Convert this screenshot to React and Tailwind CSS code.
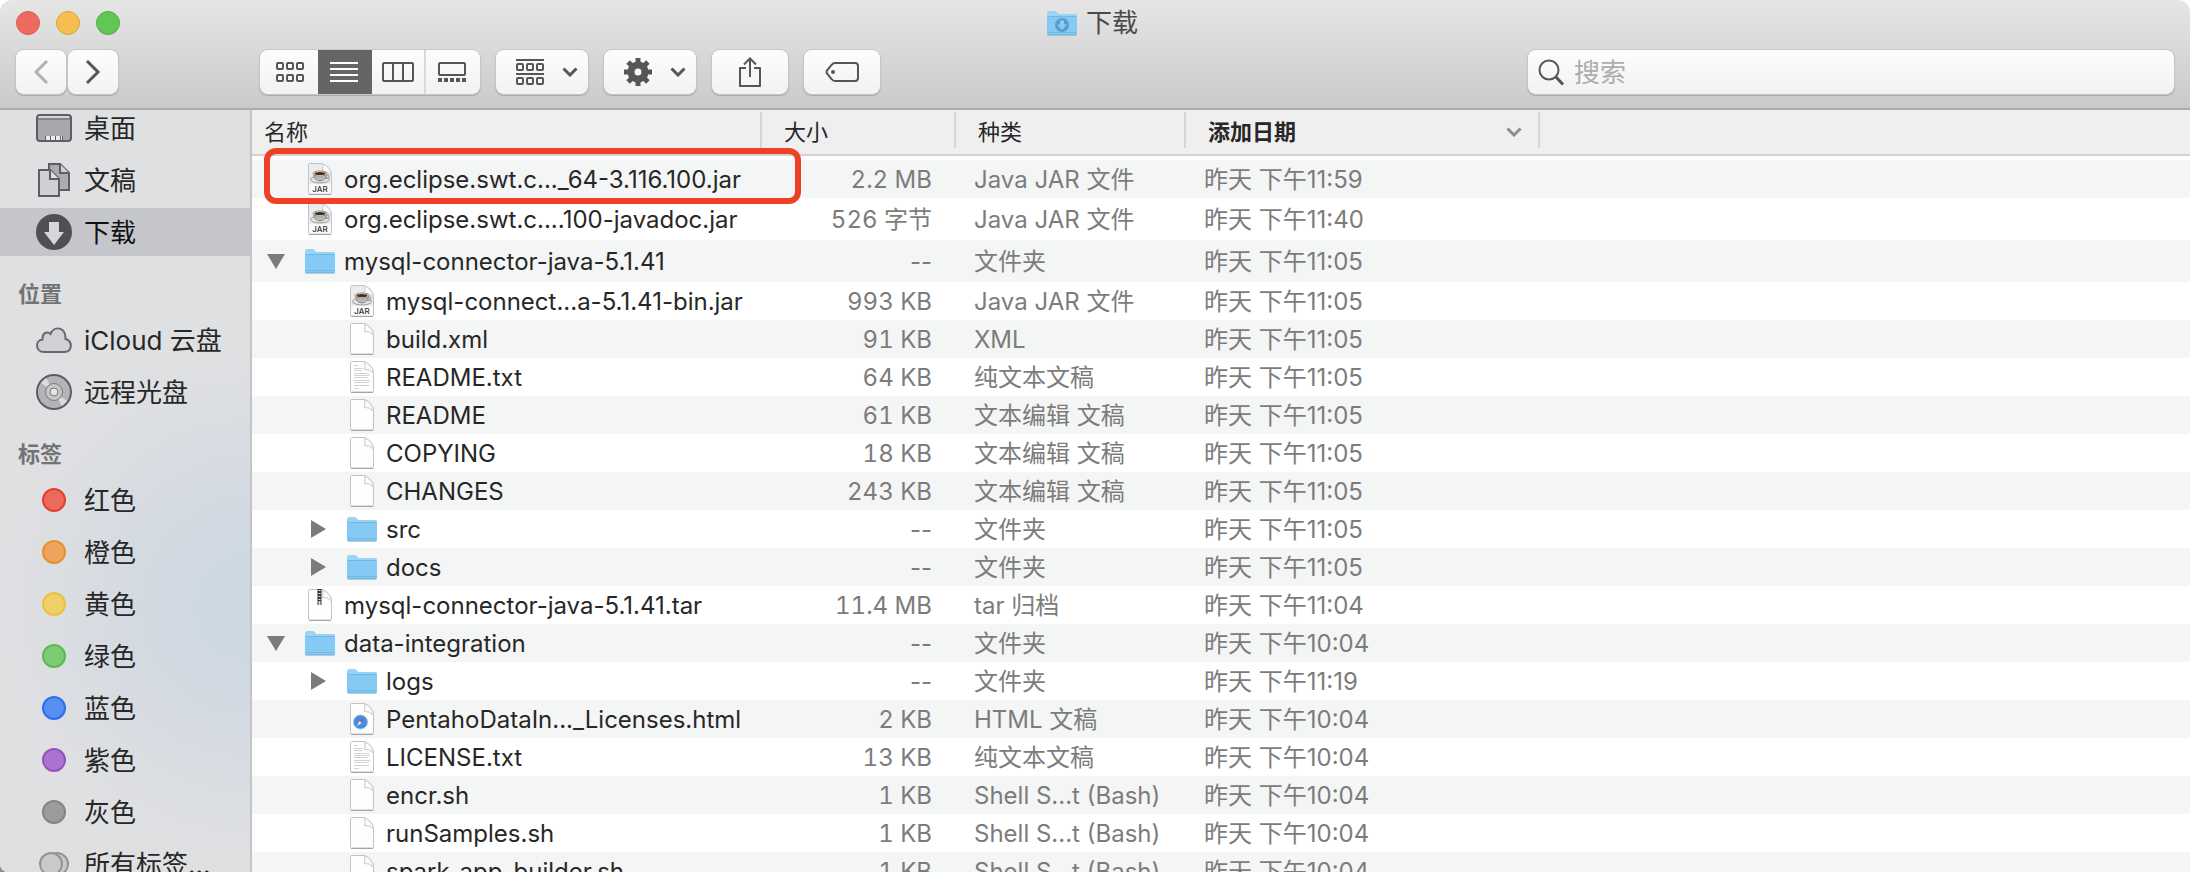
import React from 'react';
import clsx from 'clsx';

const files = [
  { name: 'org.eclipse.swt.c..._64-3.116.100.jar', icon: 'jar', depth: 0, size: '2.2 MB', kind: 'Java JAR 文件', date: '昨天 下午11:59' },
  { name: 'org.eclipse.swt.c....100-javadoc.jar', icon: 'jar', depth: 0, size: '526 字节', kind: 'Java JAR 文件', date: '昨天 下午11:40', tall: true },
  { name: 'mysql-connector-java-5.1.41', icon: 'folder', depth: 0, open: true, size: '--', kind: '文件夹', date: '昨天 下午11:05', tall: true },
  { name: 'mysql-connect...a-5.1.41-bin.jar', icon: 'jar', depth: 1, size: '993 KB', kind: 'Java JAR 文件', date: '昨天 下午11:05' },
  { name: 'build.xml', icon: 'blank', depth: 1, size: '91 KB', kind: 'XML', date: '昨天 下午11:05' },
  { name: 'README.txt', icon: 'text', depth: 1, size: '64 KB', kind: '纯文本文稿', date: '昨天 下午11:05' },
  { name: 'README', icon: 'blank', depth: 1, size: '61 KB', kind: '文本编辑 文稿', date: '昨天 下午11:05' },
  { name: 'COPYING', icon: 'blank', depth: 1, size: '18 KB', kind: '文本编辑 文稿', date: '昨天 下午11:05' },
  { name: 'CHANGES', icon: 'blank', depth: 1, size: '243 KB', kind: '文本编辑 文稿', date: '昨天 下午11:05' },
  { name: 'src', icon: 'folder', depth: 1, size: '--', kind: '文件夹', date: '昨天 下午11:05' },
  { name: 'docs', icon: 'folder', depth: 1, size: '--', kind: '文件夹', date: '昨天 下午11:05' },
  { name: 'mysql-connector-java-5.1.41.tar', icon: 'zip', depth: 0, size: '11.4 MB', kind: 'tar 归档', date: '昨天 下午11:04' },
  { name: 'data-integration', icon: 'folder', depth: 0, open: true, size: '--', kind: '文件夹', date: '昨天 下午10:04' },
  { name: 'logs', icon: 'folder', depth: 1, size: '--', kind: '文件夹', date: '昨天 下午11:19' },
  { name: 'PentahoDataIn..._Licenses.html', icon: 'html', depth: 1, size: '2 KB', kind: 'HTML 文稿', date: '昨天 下午10:04' },
  { name: 'LICENSE.txt', icon: 'text', depth: 1, size: '13 KB', kind: '纯文本文稿', date: '昨天 下午10:04' },
  { name: 'encr.sh', icon: 'blank', depth: 1, size: '1 KB', kind: 'Shell S...t (Bash)', date: '昨天 下午10:04' },
  { name: 'runSamples.sh', icon: 'blank', depth: 1, size: '1 KB', kind: 'Shell S...t (Bash)', date: '昨天 下午10:04' },
  { name: 'spark-app-builder.sh', icon: 'blank', depth: 1, size: '1 KB', kind: 'Shell S...t (Bash)', date: '昨天 下午10:04' },
];

const tags = [
  { name: '红色', color: 'bg-[#ec695d] border-[#e63f32]' },
  { name: '橙色', color: 'bg-[#eda65d] border-[#e98f30]' },
  { name: '黄色', color: 'bg-[#f0cf69] border-[#edc23e]' },
  { name: '绿色', color: 'bg-[#7ecb74] border-[#57bd4b]' },
  { name: '蓝色', color: 'bg-[#568ef1] border-[#2a6fee]' },
  { name: '紫色', color: 'bg-[#aa74d0] border-[#9550c4]' },
  { name: '灰色', color: 'bg-[#9c9c9e] border-[#858587]' },
];

const FolderIcon = ({ download = false }) => (
  <svg width="32" height="28" viewBox="0 0 32 28">
    <path d="M1 4.500Q1 2 3 2H9.500L12.500 5H29.500Q31 5 31 6.500V12H1Z" fill="#9bd3f5" />
    <path d="M1 8H31V25Q31 26 30 26H2Q1 26 1 25Z" fill="#84caf5" />
    <path d="M1.500 7.500H30.500M1.500 23.500H30.500" stroke="#6fb9e6" strokeWidth="1" fill="none" />
    <path d="M1.500 26H30.500" stroke="#69a9ce" strokeWidth="1" />
    {download && (
      <>
        <circle cx="16" cy="16" r="7" fill="#559fd3" />
        <path d="M14 11.500H18V15.500H21L16 21L11 15.500H14Z" fill="#8accf5" />
      </>
    )}
  </svg>
);

const FileIcon = ({ type }) => (
  <svg width="26" height="34" viewBox="0 0 26 34">
    <path d="M1.500 2.500Q1.500 1.500 2.500 1.500H15.500Q24.500 6 24.500 13V31Q24.500 32 23.500 32H2.500Q1.500 32 1.500 31Z" fill={type === 'jar' ? '#ececec' : '#fefefe'} stroke="#c3c3c3" />
    <path d="M2 32.500H24" stroke="#a5a5a5" />
    <path d="M15.500 1.500Q16.500 6 15.500 9.500Q21 9 24.500 13Q24 6 15.500 1.500Z" fill="#fbfbfb" stroke="#c9c9c9" />
    {type === 'text' && (
      <path d="M5 5.500H9M5 8.500H14M5 10.500H13M5 13.500H20M5 15.500H21M5 17.500H19M5 20.500H21M5 22.500H20M5 25.500H20M5 28.500H10" stroke="#d2d2d2" />
    )}
    {type === 'jar' && (
      <>
        <rect x="2" y="22" width="22" height="9.500" fill="#fafafa" />
        <ellipse cx="13" cy="17.500" rx="9.500" ry="3.500" fill="#e2e2e2" stroke="#9a9a9a" />
        <path d="M6.500 12Q7 18.500 13 19Q19 18.500 19.500 12Z" fill="#b9b9b9" stroke="#8a8a8a" />
        <path d="M19.500 13Q23 12.500 21.500 15.500Q20.500 16.500 18.500 16.500" fill="none" stroke="#8a8a8a" />
        <ellipse cx="13" cy="11.500" rx="7" ry="2.500" fill="#f6f6f6" stroke="#8d8d8d" />
        <ellipse cx="13" cy="11.500" rx="5.500" ry="1.500" fill="#4a2d12" />
        <text x="13" y="30" textAnchor="middle" fontSize="8" fontWeight="500" fontFamily="Inter, sans-serif" fill="#333">JAR</text>
      </>
    )}
    {type === 'zip' && (
      <>
        <path d="M12.500 1V17" stroke="#333" strokeWidth="4" />
        <path d="M12.500 2V13" stroke="#eee" strokeWidth="2" strokeDasharray="1 2" />
        <rect x="11.500" y="13" width="2" height="4" fill="#ddd" />
      </>
    )}
    {type === 'html' && (
      <>
        <circle cx="11.500" cy="20" r="7" fill="#3f8ee6" stroke="#a9bdd8" />
        <path d="M15 16L12.500 21L10.500 19Z" fill="#e2483d" />
        <path d="M8 24L10.500 19L12.500 21Z" fill="#f3f3f3" />
      </>
    )}
  </svg>
);

const Chevron = ({ className }) => (
  <svg width="16" height="10" viewBox="0 0 16 10" fill="none" stroke="currentColor" strokeWidth="3" className={className}>
    <path d="M1.500 1.500L8 8L14.500 1.500" />
  </svg>
);

const ToolButton = ({ label, className, children }) => (
  <button
    type="button"
    aria-label={label}
    className={clsx(
      'flex h-11 items-center justify-center rounded-lg bg-linear-to-b from-[#fdfdfd] to-[#f2f2f2] text-[#565656] shadow-[0_0_0_1px_#c6c6c6,0_1px_1px_1px_#a8a8a8]',
      className
    )}
  >
    {children}
  </button>
);

const Toolbar = () => (
  <header className="shrink-0 border-b-2 border-[#acacac] bg-linear-to-b from-[#e6e6e6] to-[#cacaca]">
    <div className="grid h-[46px] grid-cols-3 items-center px-4">
      <div className="flex gap-4">
        <button type="button" aria-label="关闭" className="size-6 rounded-full border border-[#dc574d] bg-[#ee6a5f]" />
        <button type="button" aria-label="最小化" className="size-6 rounded-full border border-[#dda23c] bg-[#f5bf4f]" />
        <button type="button" aria-label="缩放" className="size-6 rounded-full border border-[#4fac41] bg-[#62c655]" />
      </div>
      <h1 className="flex items-center justify-center gap-2 pr-1.5 text-[26px] leading-8 text-[#4b4b4b]">
        <FolderIcon download />
        下载
      </h1>
    </div>

    <div className="flex h-[62px] items-start px-4 pt-1">
      <div className="flex gap-0.5">
        <ToolButton label="后退" className="w-[50px]">
          <svg width="16" height="26" viewBox="0 0 16 26" fill="none" stroke="#b0b0b0" strokeWidth="3">
            <path d="M14 2L3 13L14 24" />
          </svg>
        </ToolButton>
        <ToolButton label="前进" className="w-[50px]">
          <svg width="16" height="26" viewBox="0 0 16 26" fill="none" stroke="currentColor" strokeWidth="3">
            <path d="M2 2L13 13L2 24" />
          </svg>
        </ToolButton>
      </div>

      {/* View switcher */}
      <div className="ml-[142px] flex h-11 overflow-hidden rounded-lg bg-linear-to-b from-[#fdfdfd] to-[#f2f2f2] text-[#565656] shadow-[0_0_0_1px_#c6c6c6,0_1px_1px_1px_#a8a8a8]">
        <button type="button" aria-label="图标" className="flex w-[58px] items-center justify-center pl-0.5">
          <svg width="28" height="20" viewBox="0 0 28 20" fill="none" stroke="currentColor" strokeWidth="2">
            {[1, 11, 21].map((x) => (
              <React.Fragment key={x}>
                <rect x={x} y="1" width="6" height="6" rx="1" />
                <rect x={x} y="13" width="6" height="6" rx="1" />
              </React.Fragment>
            ))}
          </svg>
        </button>
        <button type="button" aria-label="列表" aria-pressed="true" className="flex w-[54px] items-center justify-center bg-[#656565] pr-0.5 text-white">
          <svg width="28" height="20" viewBox="0 0 28 20" stroke="currentColor" strokeWidth="2">
            <path d="M0 1H28M0 7H28M0 13H28M0 19H28" />
          </svg>
        </button>
        <button type="button" aria-label="分栏" className="flex w-[54px] items-center justify-center border-r-2 border-[#d9d9d9]">
          <svg width="32" height="20" viewBox="0 0 32 20" fill="none" stroke="currentColor" strokeWidth="2">
            <rect x="1" y="1" width="30" height="18" rx="1" />
            <path d="M11 1V19M21 1V19" />
          </svg>
        </button>
        <button type="button" aria-label="画廊" className="flex w-[54px] items-center justify-center pr-0.5">
          <svg width="28" height="20" viewBox="0 0 28 20" fill="none" stroke="currentColor" strokeWidth="2">
            <rect x="1" y="1" width="26" height="12" rx="1" />
            <path d="M0 18H28" strokeWidth="4" strokeDasharray="4 2" />
          </svg>
        </button>
      </div>

      <div className="ml-4 flex gap-4">
        <ToolButton label="排列" className="w-[92px] gap-[18px] pl-2.5">
          <svg width="28" height="28" viewBox="0 0 28 28" fill="none" stroke="currentColor" strokeWidth="2">
            <path d="M0 2H28M0 16H28" />
            {[1, 11, 21].map((x) => (
              <React.Fragment key={x}>
                <rect x={x} y="6" width="6" height="6" rx="1" />
                <rect x={x} y="20" width="6" height="6" rx="1" />
              </React.Fragment>
            ))}
          </svg>
          <Chevron />
        </ToolButton>
        <ToolButton label="操作" className="w-[92px] gap-[18px] pl-2.5">
          <svg width="28" height="28" viewBox="0 0 28 28" fill="none" stroke="currentColor">
            <circle cx="14" cy="14" r="7" strokeWidth="7" />
            {[0, 45, 90, 135].map((angle) => (
              <path key={angle} d="M14 0V5M14 23V28" strokeWidth="5" transform={`rotate(${angle} 14 14)`} />
            ))}
          </svg>
          <Chevron />
        </ToolButton>
        <ToolButton label="共享" className="w-[76px]">
          <svg width="24" height="32" viewBox="0 0 24 32" fill="none" stroke="currentColor" strokeWidth="2">
            <path d="M8 12H2V30H22V12H16" strokeLinejoin="round" />
            <path d="M12 21V2M6 8.500L12 2.500L18 8.500" />
          </svg>
        </ToolButton>
        <ToolButton label="标记" className="w-[76px]">
          <svg width="34" height="22" viewBox="0 0 34 22" fill="none" stroke="currentColor" strokeWidth="2">
            <path d="M10 2H30Q33 2 33 5V17Q33 20 30 20H10Q8 20 6.500 18L2 12.500Q1 11 2 9.500L6.500 4Q8 2 10 2Z" />
            <circle cx="8" cy="11" r="2" fill="currentColor" stroke="none" />
          </svg>
        </ToolButton>
      </div>

      <label className="ml-auto flex h-11 w-[646px] items-center gap-2 rounded-lg bg-linear-to-b from-[#fdfdfd] to-[#f2f2f2] px-2.5 shadow-[0_0_0_1px_#c6c6c6,0_1px_1px_1px_#a8a8a8]">
        <svg width="28" height="28" viewBox="0 0 28 28" fill="none" stroke="#555" strokeWidth="2">
          <circle cx="11" cy="12" r="9.500" />
          <path d="M17.500 18.500L25 26.500" strokeWidth="3" />
        </svg>
        <input type="search" aria-label="搜索" placeholder="搜索" className="min-w-0 flex-1 bg-transparent pt-0.5 text-[26px] leading-8 outline-none placeholder:text-[#adadad]" />
      </label>
    </div>
  </header>
);

const SidebarItem = ({ icon, active = false, children }) => (
  <li>
    <a href="#" className={clsx('mb-1 flex h-12 items-center gap-3 pl-9 text-[26px] leading-8 whitespace-nowrap', active ? 'bg-[#c4c6cb] text-[#111]' : 'text-[#272727]')}>
      <span className="flex w-9 justify-center">{icon}</span>
      <span className="pt-0.5">{children}</span>
    </a>
  </li>
);

const SidebarHeading = ({ children }) => (
  <h2 className="pb-1.5 pl-[18px] text-[22px] leading-8 font-semibold text-[#737376]">{children}</h2>
);

const Sidebar = () => (
  <nav className="w-[252px] shrink-0 overflow-hidden rounded-bl-lg border-r-2 border-[#c3c4c7] bg-[#dfe0e2] bg-[radial-gradient(circle_at_100%_65%,#cbd8e3_0%,#d4dae2_20%,#dfe0e2_45%)]">
    <ul className="-mt-1.5">
      <SidebarItem
        icon={
          <svg width="36" height="28" viewBox="0 0 36 28">
            <rect x="1" y="1" width="34" height="26" rx="3" fill="#a7a8ab" stroke="#5d5e61" strokeWidth="2" />
            <path d="M3 2H33V4H2Z" fill="#d3d4d6" />
            <path d="M1 5H35" stroke="#5d5e61" />
            <path d="M9 27V22H27V27" fill="#5d5e61" />
            <path d="M10 24H26" stroke="#ececee" strokeWidth="4" strokeDasharray="4 1" />
          </svg>
        }
      >
        桌面
      </SidebarItem>
      <SidebarItem
        icon={
          <svg width="34" height="36" viewBox="0 0 34 36" stroke="#5d5e61" strokeWidth="2">
            <path d="M12 2H23L32 11V28H12Z" fill="#abacaf" />
            <path d="M23 2V11H32" fill="#d3d4d6" />
            <path d="M2 8H13L22 17V34H2Z" fill="#cfd0d3" />
            <path d="M13 8V17H22" fill="#e0e0e2" />
          </svg>
        }
      >
        文稿
      </SidebarItem>
      <SidebarItem
        active
        icon={
          <svg width="36" height="36" viewBox="0 0 36 36">
            <circle cx="18" cy="18" r="18" fill="#4f5054" />
            <path d="M13 8H23V18H28L18 31L8 18H13Z" fill="#d6d7da" />
          </svg>
        }
      >
        下载
      </SidebarItem>
    </ul>

    <div className="mt-[22px]">
      <SidebarHeading>位置</SidebarHeading>
      <ul>
        <SidebarItem
          icon={
            <svg width="36" height="26" viewBox="0 0 36 26">
              <path d="M8 25C-1 25-1 13 6.500 12.500C6 6 11 4 14.500 7C18-2 30 0 29.500 12C37 14 36.500 25 28.500 25Z" fill="#d0d1d3" stroke="#66676a" strokeWidth="2" />
            </svg>
          }
        >
          iCloud 云盘
        </SidebarItem>
        <SidebarItem
          icon={
            <svg width="36" height="36" viewBox="0 0 36 36" fill="none">
              <circle cx="18" cy="18" r="17" fill="#b3b4b6" stroke="#5d5e61" strokeWidth="2" />
              <path d="M18 18L5 9L10 4ZM18 18L31 27L26 32Z" fill="#dcdcde" />
              <circle cx="18" cy="18" r="8.500" fill="#c5c6c8" stroke="#77787b" />
              <circle cx="18" cy="18" r="4" fill="#e4e4e6" stroke="#77787b" />
            </svg>
          }
        >
          远程光盘
        </SidebarItem>
      </ul>
    </div>

    <div className="mt-[22px]">
      <SidebarHeading>标签</SidebarHeading>
      <ul>
        {tags.map((tag) => (
          <SidebarItem key={tag.name} icon={<span className={clsx('size-6 rounded-full border-2', tag.color)} />}>
            {tag.name}
          </SidebarItem>
        ))}
        <SidebarItem
          icon={
            <svg width="30" height="24" viewBox="0 0 30 24" fill="#c9cacc" stroke="#929395" strokeWidth="2">
              <circle cx="18" cy="12" r="11" />
              <circle cx="12" cy="12" r="11" />
            </svg>
          }
        >
          所有标签...
        </SidebarItem>
      </ul>
    </div>
  </nav>
);

const HeaderCell = ({ className, children }) => (
  <th scope="col" className="border-b-2 border-[#d2d2d2] bg-[#efefef] p-0 text-left font-normal">
    <div className={clsx('mb-1 flex h-9 items-center border-[#d6d6d6] pt-1', className)}>{children}</div>
  </th>
);

const FileRow = ({ file }) => (
  <tr className={clsx('whitespace-nowrap odd:bg-[#f4f5f5]', file.tall ? 'h-[42px]' : 'h-[38px]')}>
    <td className="p-0 pl-3.5 text-[#272727]">
      <div className={clsx('flex items-center', file.depth === 1 && 'pl-[42px]')}>
        <span className="flex w-5 justify-center">
          {file.icon === 'folder' && (
            <button type="button" aria-label={file.open ? '折叠' : '展开'} className="text-[#7b7b7b]">
              <svg width="18" height="18" viewBox="0 0 18 18" fill="currentColor">
                <path d={file.open ? 'M0 2H18L9 17Z' : 'M2 0V18L17 9Z'} />
              </svg>
            </button>
          )}
        </span>
        <span className="ml-[18px] flex w-8 justify-center">
          {file.icon === 'folder' ? <FolderIcon /> : <FileIcon type={file.icon} />}
        </span>
        <span className="ml-2 pt-0.5">{file.name}</span>
      </div>
    </td>
    <td className={clsx('p-0 pt-0.5 pr-6 text-right', file.icon !== 'folder' && 'tabular-nums')}>{file.size}</td>
    <td className="p-0 pt-0.5 pl-[18px]">{file.kind}</td>
    <td className="p-0 pt-0.5 pl-[18px]">{file.date}</td>
    <td className="p-0" />
  </tr>
);

const FileList = () => (
  <main className="relative min-w-0 flex-1 overflow-hidden bg-white">
    <table className="w-full table-fixed border-separate border-spacing-0 text-[24px] leading-8 text-[#7c7c7c]">
      <colgroup>
        <col className="w-[510px]" />
        <col className="w-[194px]" />
        <col className="w-[230px]" />
        <col className="w-[354px]" />
        <col />
      </colgroup>
      <thead className="text-[22px] text-[#272727]">
        <tr className="h-[46px]">
          <HeaderCell className="border-r-2 pl-3">名称</HeaderCell>
          <HeaderCell className="border-r-2 pl-[22px]">大小</HeaderCell>
          <HeaderCell className="border-r-2 pl-[22px]">种类</HeaderCell>
          <HeaderCell className="justify-between border-r-2 pr-4 pl-[22px] font-bold">
            添加日期
            <Chevron className="text-[#8e8e8e]" />
          </HeaderCell>
          <HeaderCell />
        </tr>
      </thead>
      <tbody aria-hidden="true">
        <tr className="h-1">
          <td colSpan={5} className="p-0" />
        </tr>
      </tbody>
      <tbody>
        {files.map((file) => (
          <FileRow key={file.name} file={file} />
        ))}
      </tbody>
    </table>

    {/* Highlight around the first file */}
    <div className="pointer-events-none absolute top-[38px] left-3 h-[56px] w-[537px] rounded-xl border-[6px] border-[#ee4027]" />
  </main>
);

export default function App() {
  return (
    <div className="flex h-screen flex-col overflow-hidden rounded-t-xl bg-white font-['Inter','Noto_Sans_CJK_SC',sans-serif]">
      <Toolbar />
      <div className="flex min-h-0 flex-1 bg-[#8f8f91]">
        <Sidebar />
        <FileList />
      </div>
    </div>
  );
}
